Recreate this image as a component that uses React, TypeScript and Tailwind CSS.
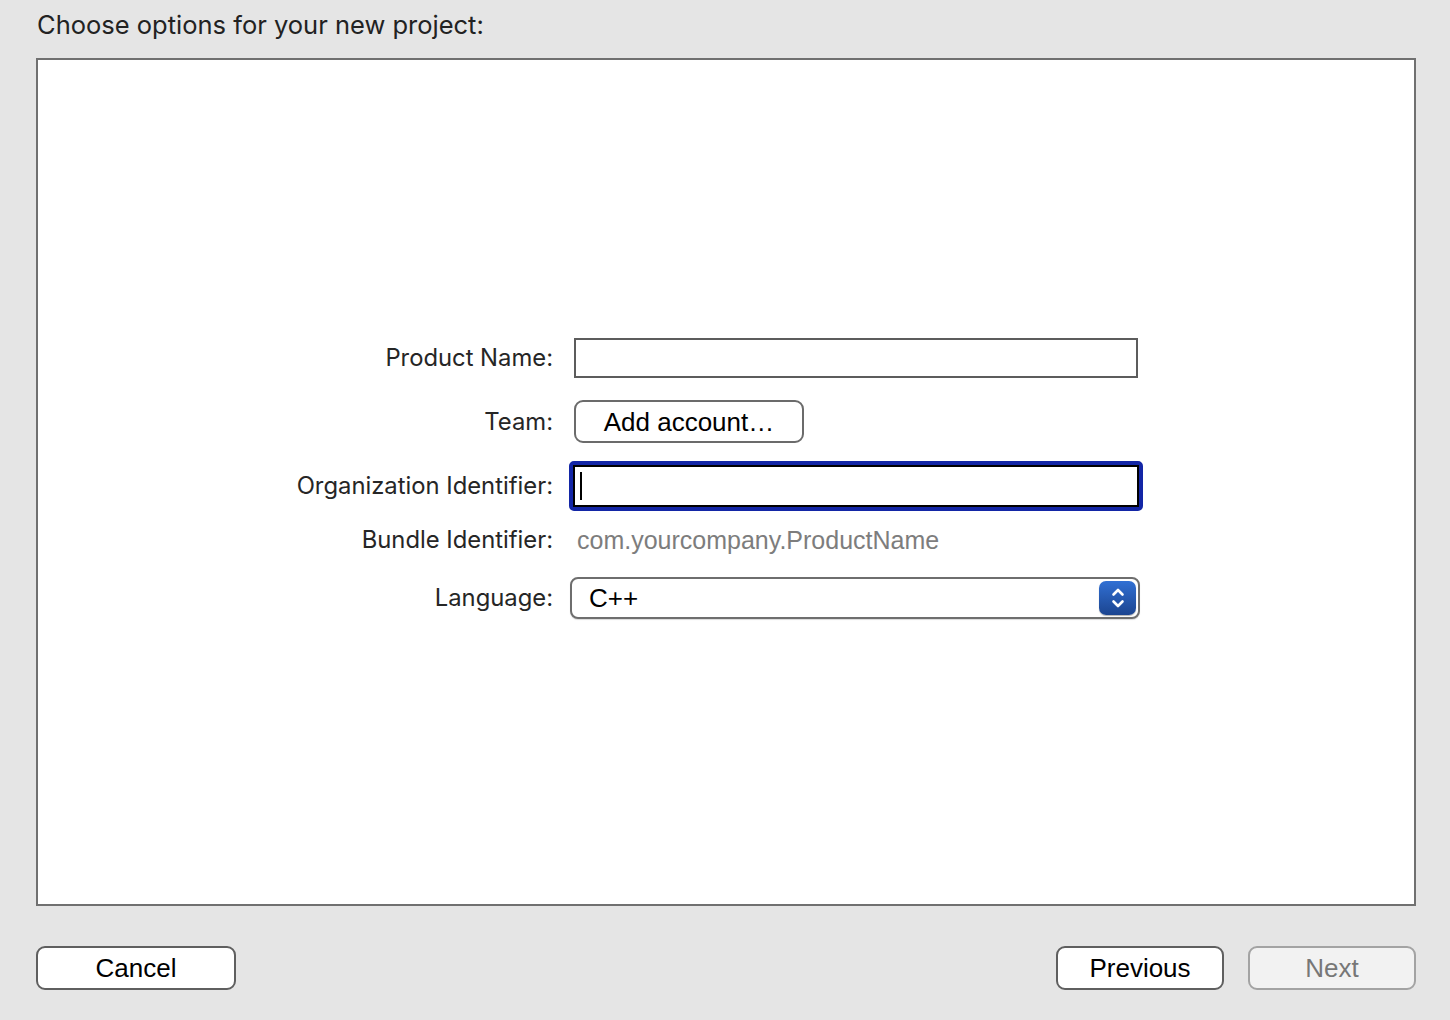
import React from 'react'

const labelFont = { fontFamily: 'Inter, "Noto Sans", sans-serif' }

function Row({ label, height, children }: { label: string; height: number; children: React.ReactNode }) {
  return (
    <div className="flex items-center" style={{ height }}>
      <div className="w-[515px] shrink-0 text-right text-[23.8px] text-[#262626]" style={labelFont}>
        {label}
      </div>
      {children}
    </div>
  )
}

function Stepper() {
  return (
    <div className="ml-auto mr-[2px] flex h-[34px] w-[37px] items-center justify-center rounded-[7px] bg-gradient-to-b from-[#3170d4] to-[#1c4590] shadow-[0_1px_1px_rgba(0,0,0,0.3)]">
      <svg width="16" height="26" viewBox="0 0 16 26" fill="none" stroke="white" strokeWidth="2.6" strokeLinecap="round" strokeLinejoin="round">
        <path d="M3.5 9.5 8 5l4.5 4.5" />
        <path d="M3.5 16.5 8 21l4.5-4.5" />
      </svg>
    </div>
  )
}

export default function App() {
  return (
    <div className="flex h-[1020px] w-[1450px] flex-col bg-[#e5e5e5]" style={{ fontFamily: '"Liberation Sans", Arial, sans-serif' }}>
      <h1 className="pl-[37px] pt-[10px] text-[25.5px] leading-[30px] font-normal text-[#222]" style={labelFont}>
        Choose options for your new project:
      </h1>

      <div className="ml-[36px] mt-[18px] flex h-[848px] w-[1380px] flex-col border-2 border-[#707070] bg-white pt-[278px]">
        <Row label="Product Name:" height={40}>
          <div className="ml-[21px] h-[40px] w-[564px] border-2 border-[#5c5c5c] bg-white" />
        </Row>

        <div className="h-[22px]" />
        <Row label="Team:" height={43}>
          <button className="ml-[21px] h-[43px] w-[230px] rounded-[9px] border-2 border-[#6b6b6b] bg-white text-[26px] leading-none text-black">
            Add account…
          </button>
        </Row>

        <div className="h-[18px]" />
        <Row label="Organization Identifier:" height={50}>
          <div className="ml-[16px] h-[50px] w-[574px] rounded-[5px] border-[4px] border-[#1326a6]">
            <div className="flex h-full w-full items-center border-2 border-black bg-white pl-[5px]">
              <div className="h-[28px] w-[2px] bg-black" />
            </div>
          </div>
        </Row>

        <div className="h-[14px]" />
        <Row label="Bundle Identifier:" height={30}>
          <div className="ml-[24px] text-[25px] leading-none text-[#7d7d7d]">com.yourcompany.ProductName</div>
        </Row>

        <div className="h-[22px]" />
        <Row label="Language:" height={42}>
          <div className="ml-[17px] flex h-[42px] w-[570px] items-center rounded-[8px] border-2 border-[#6e6e6e] bg-white pl-[17px] shadow-[0_1px_1px_rgba(0,0,0,0.15)]">
            <span className="text-[26px] leading-none text-black">C++</span>
            <Stepper />
          </div>
        </Row>
      </div>

      <div className="mx-[34px] ml-[36px] mt-[40px] flex items-center">
        <button className="h-[44px] w-[200px] rounded-[9px] border-2 border-[#5f5f5f] bg-white text-[26px] leading-none text-black">
          Cancel
        </button>
        <div className="ml-auto flex gap-[24px]">
          <button className="h-[44px] w-[168px] rounded-[9px] border-2 border-[#5f5f5f] bg-white text-[26px] leading-none text-black">
            Previous
          </button>
          <button className="h-[44px] w-[168px] rounded-[9px] border-2 border-[#a3a3a3] bg-[#f2f2f2] text-[26px] leading-none text-[#777]">
            Next
          </button>
        </div>
      </div>
    </div>
  )
}
